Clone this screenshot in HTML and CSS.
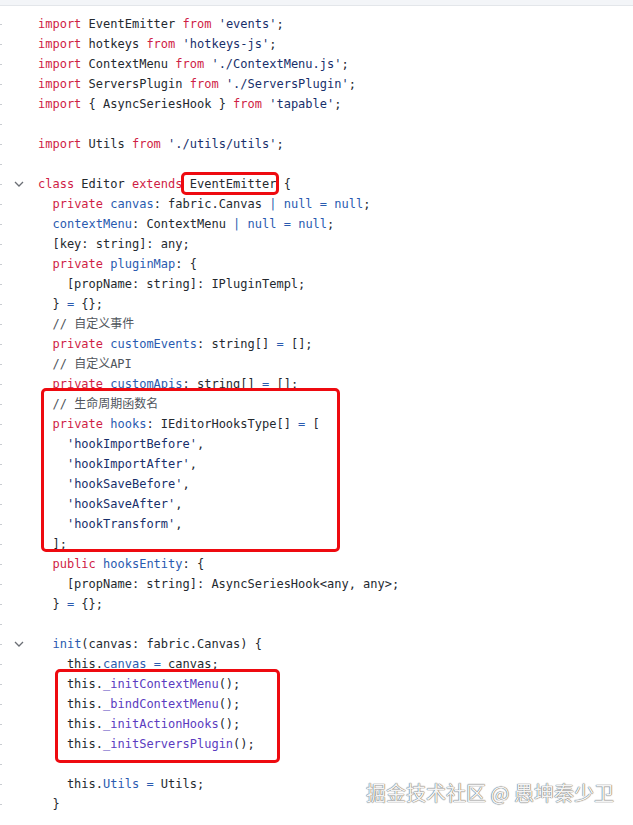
FILE: index.html
```html
<!DOCTYPE html>
<html lang="zh">
<head>
<meta charset="utf-8">
<title>Editor.ts</title>
<link rel="stylesheet" href="styles.css">
</head>
<body>
<div class="topbar"></div>
<div class="code">
<div class="ln"><span class="g"></span><span class="fold"></span><span class="t"><span class="k">import</span> EventEmitter <span class="k">from</span> <span class="s">'events'</span>;</span></div>
<div class="ln"><span class="g"></span><span class="fold"></span><span class="t"><span class="k">import</span> hotkeys <span class="k">from</span> <span class="s">'hotkeys-js'</span>;</span></div>
<div class="ln"><span class="g"></span><span class="fold"></span><span class="t"><span class="k">import</span> ContextMenu <span class="k">from</span> <span class="s">'./ContextMenu.js'</span>;</span></div>
<div class="ln"><span class="g"></span><span class="fold"></span><span class="t"><span class="k">import</span> ServersPlugin <span class="k">from</span> <span class="s">'./ServersPlugin'</span>;</span></div>
<div class="ln"><span class="g"></span><span class="fold"></span><span class="t"><span class="k">import</span> { AsyncSeriesHook } <span class="k">from</span> <span class="s">'tapable'</span>;</span></div>
<div class="ln"><span class="g"></span><span class="fold"></span><span class="t"> </span></div>
<div class="ln"><span class="g"></span><span class="fold"></span><span class="t"><span class="k">import</span> Utils <span class="k">from</span> <span class="s">'./utils/utils'</span>;</span></div>
<div class="ln"><span class="g"></span><span class="fold"></span><span class="t"> </span></div>
<div class="ln"><span class="g"></span><span class="fold"><svg width="10" height="6" viewBox="0 0 10 6"><polyline points="1,1 5,5 9,1" fill="none" stroke="#6b6f75" stroke-width="1.3"/></svg></span><span class="t"><span class="k">class</span> Editor <span class="k">extends</span> EventEmitter {</span></div>
<div class="ln"><span class="g"></span><span class="fold"></span><span class="t">  <span class="k">private</span> <span class="p">canvas</span>: fabric.Canvas <span class="p">|</span> <span class="p">null</span> <span class="p">=</span> <span class="p">null</span>;</span></div>
<div class="ln"><span class="g"></span><span class="fold"></span><span class="t">  <span class="p">contextMenu</span>: ContextMenu <span class="p">|</span> <span class="p">null</span> <span class="p">=</span> <span class="p">null</span>;</span></div>
<div class="ln"><span class="g"></span><span class="fold"></span><span class="t">  [key: string]: any;</span></div>
<div class="ln"><span class="g"></span><span class="fold"></span><span class="t">  <span class="k">private</span> <span class="p">pluginMap</span>: {</span></div>
<div class="ln"><span class="g"></span><span class="fold"></span><span class="t">    [propName: string]: IPluginTempl;</span></div>
<div class="ln"><span class="g"></span><span class="fold"></span><span class="t">  } <span class="p">=</span> {};</span></div>
<div class="ln"><span class="g"></span><span class="fold"></span><span class="t">  <span class="c">// 自定义事件</span></span></div>
<div class="ln"><span class="g"></span><span class="fold"></span><span class="t">  <span class="k">private</span> <span class="p">customEvents</span>: string[] <span class="p">=</span> [];</span></div>
<div class="ln"><span class="g"></span><span class="fold"></span><span class="t">  <span class="c">// 自定义API</span></span></div>
<div class="ln"><span class="g"></span><span class="fold"></span><span class="t">  <span class="k">private</span> <span class="p">customApis</span>: string[] <span class="p">=</span> [];</span></div>
<div class="ln"><span class="g"></span><span class="fold"></span><span class="t">  <span class="c">// 生命周期函数名</span></span></div>
<div class="ln"><span class="g"></span><span class="fold"></span><span class="t">  <span class="k">private</span> <span class="p">hooks</span>: IEditorHooksType[] <span class="p">=</span> [</span></div>
<div class="ln"><span class="g"></span><span class="fold"></span><span class="t">    <span class="s">'hookImportBefore'</span>,</span></div>
<div class="ln"><span class="g"></span><span class="fold"></span><span class="t">    <span class="s">'hookImportAfter'</span>,</span></div>
<div class="ln"><span class="g"></span><span class="fold"></span><span class="t">    <span class="s">'hookSaveBefore'</span>,</span></div>
<div class="ln"><span class="g"></span><span class="fold"></span><span class="t">    <span class="s">'hookSaveAfter'</span>,</span></div>
<div class="ln"><span class="g"></span><span class="fold"></span><span class="t">    <span class="s">'hookTransform'</span>,</span></div>
<div class="ln"><span class="g"></span><span class="fold"></span><span class="t">  ];</span></div>
<div class="ln"><span class="g"></span><span class="fold"></span><span class="t">  <span class="k">public</span> <span class="p">hooksEntity</span>: {</span></div>
<div class="ln"><span class="g"></span><span class="fold"></span><span class="t">    [propName: string]: AsyncSeriesHook&lt;any, any&gt;;</span></div>
<div class="ln"><span class="g"></span><span class="fold"></span><span class="t">  } <span class="p">=</span> {};</span></div>
<div class="ln"><span class="g"></span><span class="fold"></span><span class="t"> </span></div>
<div class="ln"><span class="g"></span><span class="fold"><svg width="10" height="6" viewBox="0 0 10 6"><polyline points="1,1 5,5 9,1" fill="none" stroke="#6b6f75" stroke-width="1.3"/></svg></span><span class="t">  <span class="p">init</span>(canvas: fabric.Canvas) {</span></div>
<div class="ln"><span class="g"></span><span class="fold"></span><span class="t">    this.<span class="p">canvas</span> <span class="p">=</span> canvas;</span></div>
<div class="ln"><span class="g"></span><span class="fold"></span><span class="t">    this.<span class="f">_initContextMenu</span>();</span></div>
<div class="ln"><span class="g"></span><span class="fold"></span><span class="t">    this.<span class="f">_bindContextMenu</span>();</span></div>
<div class="ln"><span class="g"></span><span class="fold"></span><span class="t">    this.<span class="f">_initActionHooks</span>();</span></div>
<div class="ln"><span class="g"></span><span class="fold"></span><span class="t">    this.<span class="f">_initServersPlugin</span>();</span></div>
<div class="ln"><span class="g"></span><span class="fold"></span><span class="t"> </span></div>
<div class="ln"><span class="g"></span><span class="fold"></span><span class="t">    this.<span class="p">Utils</span> <span class="p">=</span> Utils;</span></div>
<div class="ln"><span class="g"></span><span class="fold"></span><span class="t">  }</span></div>

<div class="mark mark-a"></div>
<div class="mark mark-b"></div>
<div class="mark mark-c"></div>
</div>
<div class="watermark">掘金技术社区 @ 愚坤秦少卫</div>
</body>
</html>
```
FILE: styles.css
```css
html, body {
  margin: 0;
  padding: 0;
  background: #ffffff;
}
body {
  width: 633px;
  height: 825px;
  overflow: hidden;
  position: relative;
}
.topbar {
  height: 5px;
  background: #f3f5f8;
  border-bottom: 1px solid #e3e6ea;
}
.code {
  position: relative;
  padding-top: 8px;
  font-family: "DejaVu Sans Mono", "Noto Sans CJK SC", monospace;
  font-size: 12px;
  color: #24292f;
}
.ln {
  display: flex;
  align-items: center;
  height: 20px;
  line-height: 20px;
}
.g {
  width: 2px;
  height: 1px;
  background: #c9ccd1;
  margin-right: 10px;
  flex: none;
}
.fold {
  width: 26px;
  flex: none;
  display: flex;
  align-items: center;
  padding-left: 2px;
  box-sizing: border-box;
}
.fold svg { display: block; }
.t {
  white-space: pre;
}
.k { color: #cf1d45; }
.p { color: #2a5bb0; }
.s { color: #182f6b; }
.f { color: #5b3cc0; }
.c { color: #4f555c; }

.mark {
  position: absolute;
  border: 3px solid #ee0a10;
  border-radius: 5px;
  box-sizing: border-box;
}
.mark-a { left: 181px; top: 166px; width: 98px; height: 23px; }
.mark-b { left: 41px; top: 382px; width: 299px; height: 164px; }
.mark-c { left: 55px; top: 663px; width: 225px; height: 94px; }

.watermark {
  position: absolute;
  left: 366px;
  top: 779px;
  font-family: "Noto Sans CJK SC", sans-serif;
  font-size: 20px;
  line-height: 28px;
  color: #f4f4f4;
  text-shadow: 0 0 1px #5a5a5a, 0 0 1px #5a5a5a;
  white-space: nowrap;
}
```
